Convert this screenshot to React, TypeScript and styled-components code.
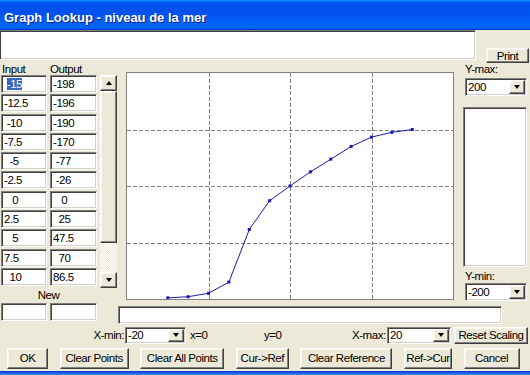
import React from "react";
import styled, { createGlobalStyle, css } from "styled-components";

const BEIGE = "#ece9d8";

const GlobalStyle = createGlobalStyle`
  html, body {
    margin: 0;
    padding: 0;
    background: ${BEIGE};
  }
  body {
    font-family: "Liberation Sans Narrow", "Arial Narrow", "Liberation Sans", Arial, sans-serif;
    font-size: 11.5px;
    letter-spacing: -0.45px;
    color: #000;
  }
`;

const sunken = css`
  box-sizing: border-box;
  border: 1px solid;
  border-color: #808080 #ffffff #ffffff #808080;
  box-shadow: inset 1px 1px #404040, inset -1px -1px #d4d0c8;
  background: #fff;
`;

const raised = css`
  box-sizing: border-box;
  border: 1px solid;
  border-color: #ffffff #404040 #404040 #ffffff;
  box-shadow: inset -1px -1px #808080, inset 1px 1px #f7f6ef;
  background: ${BEIGE};
`;

const Window = styled.div`
  width: 530px;
  height: 375px;
  display: flex;
  flex-direction: column;
  overflow: hidden;
  background: ${BEIGE};
`;

const TitleBar = styled.div`
  flex: none;
  height: 30px;
  box-sizing: border-box;
  padding: 4px 0 0 4px;
  display: flex;
  align-items: center;
  background: linear-gradient(
    180deg,
    #0997ff,
    #0053ee 8%,
    #0050ee 40%,
    #0066ff 88%,
    #0066ff 93%,
    #005bff 95%,
    #003dd7 96%,
    #003dd7
  );
  color: #fff;
  font-family: "Liberation Sans", Arial, sans-serif;
  font-weight: bold;
  font-size: 13px;
  letter-spacing: 0;
  text-shadow: 1px 1px #0a1f7a;
`;

const TopRow = styled.div`
  flex: none;
  height: 33px;
  display: flex;
`;

const Memo = styled.div`
  ${sunken};
  width: 476px;
  height: 30px;
  border-left: none;
`;

const Button = styled.button<{ $w: number; $h?: number }>`
  ${raised};
  width: ${(p) => p.$w}px;
  height: ${(p) => p.$h ?? 21}px;
  padding: 0;
  font: inherit;
  letter-spacing: inherit;
  white-space: nowrap;
  color: #000;
  display: flex;
  align-items: center;
  justify-content: center;
  flex: none;
`;

const PrintButton = styled(Button)`
  align-self: flex-end;
  margin-left: 10px;
`;

const ResetButton = styled(Button)`
  margin-left: 3px;
`;

const Main = styled.div`
  flex: none;
  display: grid;
  grid-template-columns: 118px 345px 67px;
  grid-template-rows: 240px 22px 20px 26px;
`;

const LeftPanel = styled.div`
  display: flex;
  flex-direction: column;
`;

const LabelRow = styled.div`
  display: flex;
  height: 12px;
  line-height: 12px;
`;

const ColLabel = styled.span<{ $w: number }>`
  width: ${(p) => p.$w}px;
  padding-left: 2px;
  box-sizing: border-box;
`;

const TableRow = styled.div`
  display: flex;
  height: 213px;
`;

const Grid = styled.div`
  margin-left: 1px;
  display: grid;
  grid-template-columns: 46px 47px;
  grid-auto-rows: 18px;
  column-gap: 3px;
  row-gap: 1.3px;
  align-content: start;
`;

const Cell = styled.div`
  ${sunken};
  height: 18px;
  padding-left: 2px;
  line-height: 16px;
  white-space: pre;
  overflow: hidden;
`;

const Selected = styled.span`
  background: #316ac5;
  color: #fff;
`;

const ScrollBar = styled.div`
  margin-left: 3px;
  width: 17px;
  display: flex;
  flex-direction: column;
`;

const ScrollButton = styled.div`
  ${raised};
  flex: none;
  height: 16px;
  display: flex;
  align-items: center;
  justify-content: center;
`;

const Arrow = styled.span<{ $down?: boolean }>`
  width: 0;
  height: 0;
  border-left: 3.5px solid transparent;
  border-right: 3.5px solid transparent;
  ${(p) =>
    p.$down
      ? css`
          border-top: 4px solid #000;
        `
      : css`
          border-bottom: 4px solid #000;
        `}
`;

const Thumb = styled.div`
  ${raised};
  flex: none;
  height: 152px;
`;

const Track = styled.div`
  flex: 1;
  background: repeating-conic-gradient(#ffffff 0 25%, ${BEIGE} 0 50%) 0 0 / 2px 2px;
`;

const NewLabel = styled.div`
  width: 97px;
  height: 14px;
  line-height: 14px;
  text-align: center;
`;

const GraphFrame = styled.div`
  margin: 9px 0 0 8px;
  width: 328px;
  height: 228px;
  box-sizing: border-box;
  border: 1px solid #808080;
  background: #fff;
`;

const RightPanel = styled.div`
  display: flex;
  flex-direction: column;
`;

const SideLabel = styled.div<{ $top?: number }>`
  height: 13px;
  line-height: 13px;
  padding-left: 2px;
  margin-top: ${(p) => p.$top ?? 0}px;
`;

const ListBox = styled.div`
  ${sunken};
  width: 64px;
  height: 160px;
  margin-top: 11px;
`;

const Combo = styled.div<{ $w: number; $h: number; $left?: number; $top?: number }>`
  ${sunken};
  flex: none;
  width: ${(p) => p.$w}px;
  height: ${(p) => p.$h}px;
  margin-left: ${(p) => p.$left ?? 0}px;
  margin-top: ${(p) => p.$top ?? 0}px;
  padding: 1px;
  display: flex;
  align-items: stretch;
`;

const ComboValue = styled.span`
  flex: 1;
  padding-left: 1px;
  display: flex;
  align-items: center;
`;

const DropButton = styled.div`
  ${raised};
  width: 16px;
  display: flex;
  align-items: center;
  justify-content: center;
`;

const NewRow = styled.div`
  display: flex;
  gap: 3px;
  margin-left: 1px;
`;

const NewCell = styled.div<{ $w: number }>`
  ${sunken};
  width: ${(p) => p.$w}px;
  height: 18px;
`;

const StatusField = styled.div`
  ${sunken};
  grid-column: 2 / 4;
  width: 384px;
  height: 18px;
  margin-top: 3px;
`;

const AxisRow = styled.div`
  grid-column: 1 / -1;
  display: flex;
  align-items: center;
`;

const Slot = styled.span<{ $w: number; $pad?: number; $right?: boolean }>`
  flex: none;
  width: ${(p) => p.$w}px;
  padding-left: ${(p) => p.$pad ?? 0}px;
  padding-right: ${(p) => (p.$right ? 1 : 0)}px;
  box-sizing: border-box;
  text-align: ${(p) => (p.$right ? "right" : "left")};
  white-space: nowrap;
`;

const ButtonRow = styled.div`
  grid-column: 1 / -1;
  display: flex;
  align-items: center;
  gap: 11.6px;
  padding-left: 7px;
`;

const BottomEdge = styled.div`
  flex: none;
  height: 4px;
  background: linear-gradient(180deg, #0831d9, #1d5ee8 50%, #3a8cf0);
`;

const rows: [string, string][] = [
  [" -15", "-198"],
  ["-12.5", "-196"],
  [" -10", "-190"],
  ["-7.5", "-170"],
  ["  -5", " -77"],
  ["-2.5", " -26"],
  ["   0", "   0"],
  ["2.5", "  25"],
  ["   5", "47.5"],
  ["7.5", "  70"],
  ["  10", "86.5"],
];

const points: [number, number][] = [
  [-15, -198],
  [-12.5, -196],
  [-10, -190],
  [-7.5, -170],
  [-5, -77],
  [-2.5, -26],
  [0, 0],
  [2.5, 25],
  [5, 47.5],
  [7.5, 70],
  [10, 86.5],
  [12.5, 95],
  [15, 100],
];

const PW = 326;
const PH = 226;
const px = (x: number) => ((x + 20) / 40) * PW;
const py = (y: number) => ((200 - y) / 400) * PH;

const Chart = () => {
  const line = points.map(([x, y]) => `${px(x).toFixed(1)},${py(y).toFixed(1)}`).join(" ");
  return (
    <svg width={PW} height={PH} style={{ display: "block" }}>
      {[1, 2, 3].map((i) => (
        <g key={i} stroke="#808080" strokeWidth={1} strokeDasharray="4 2">
          <line x1={Math.round((PW * i) / 4) + 0.5} y1={0} x2={Math.round((PW * i) / 4) + 0.5} y2={PH} />
          <line x1={0} y1={Math.round((PH * i) / 4) + 0.5} x2={PW} y2={Math.round((PH * i) / 4) + 0.5} />
        </g>
      ))}
      <polyline points={line} fill="none" stroke="#1c1caa" strokeWidth={1} />
      {points.map(([x, y]) => (
        <rect key={x} x={px(x) - 1.5} y={py(y) - 1.5} width={3} height={3} fill="#1a1ab8" />
      ))}
    </svg>
  );
};

const ComboBox = ({ value, w, h, left, top }: { value: string; w: number; h: number; left?: number; top?: number }) => (
  <Combo $w={w} $h={h} $left={left} $top={top}>
    <ComboValue>{value}</ComboValue>
    <DropButton>
      <Arrow $down />
    </DropButton>
  </Combo>
);

const App: React.FC = () => {
  return (
    <Window>
      <GlobalStyle />
      <TitleBar>Graph Lookup - niveau de la mer</TitleBar>
      <TopRow>
        <Memo />
        <PrintButton $w={43} $h={15}>
          Print
        </PrintButton>
      </TopRow>
      <Main>
        <LeftPanel>
          <LabelRow>
            <ColLabel $w={48}>Input</ColLabel>
            <ColLabel $w={50}>Output</ColLabel>
          </LabelRow>
          <TableRow>
            <Grid>
              {rows.map(([input, output], i) => (
                <React.Fragment key={i}>
                  <Cell>{i === 0 ? <>{" "}<Selected>-15</Selected></> : input}</Cell>
                  <Cell>{output}</Cell>
                </React.Fragment>
              ))}
            </Grid>
            <ScrollBar>
              <ScrollButton>
                <Arrow />
              </ScrollButton>
              <Thumb />
              <Track />
              <ScrollButton>
                <Arrow $down />
              </ScrollButton>
            </ScrollBar>
          </TableRow>
          <NewLabel>New</NewLabel>
        </LeftPanel>

        <GraphFrame>
          <Chart />
        </GraphFrame>

        <RightPanel>
          <SideLabel>Y-max:</SideLabel>
          <ComboBox value="200" w={62} h={18} left={2} top={2} />
          <ListBox />
          <SideLabel $top={3}>Y-min:</SideLabel>
          <ComboBox value="-200" w={62} h={18} left={2} />
        </RightPanel>

        <NewRow>
          <NewCell $w={46} />
          <NewCell $w={47} />
        </NewRow>
        <StatusField />

        <AxisRow>
          <Slot $w={125} $right>
            X-min:
          </Slot>
          <ComboBox value="-20" w={61} h={17} />
          <Slot $w={75} $pad={4}>
            x=0
          </Slot>
          <Slot $w={91} $pad={3}>
            y=0
          </Slot>
          <Slot $w={34} $right>
            X-max:
          </Slot>
          <ComboBox value="20" w={64} h={17} left={1} />
          <ResetButton $w={74} $h={17}>
            Reset Scaling
          </ResetButton>
        </AxisRow>

        <ButtonRow>
          <Button $w={41}>OK</Button>
          <Button $w={69}>Clear Points</Button>
          <Button $w={84}>Clear All Points</Button>
          <Button $w={53}>Cur-&gt;Ref</Button>
          <Button $w={92}>Clear Reference</Button>
          <Button $w={48}>Ref-&gt;Cur</Button>
          <Button $w={56}>Cancel</Button>
        </ButtonRow>
      </Main>
      <BottomEdge />
    </Window>
  );
};

export default App;
